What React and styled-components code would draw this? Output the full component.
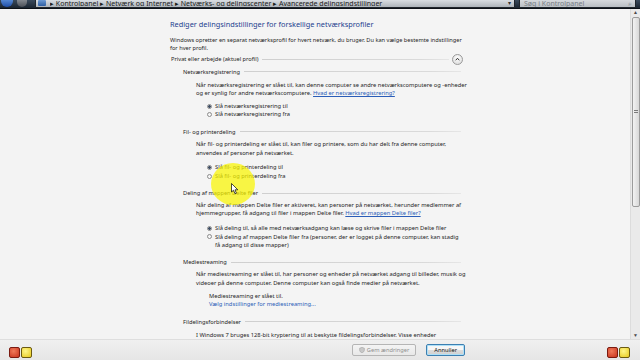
import React from 'react';
import styled, { createGlobalStyle } from 'styled-components';

const Global = createGlobalStyle`
  html, body { margin: 0; padding: 0; width: 640px; height: 360px; overflow: hidden; background: #f4f4f4; }
  body { font-family: "Noto Sans", "Open Sans", sans-serif; color: #1e1e1e; }
  * { box-sizing: border-box; }
`;

const Page = styled.div`
  position: relative;
  width: 640px;
  height: 360px;
  display: flex;
  flex-direction: column;
  background: #f4f4f4;
  overflow: hidden;
`;

const TopBar = styled.div`
  height: 9px;
  flex: none;
  display: flex;
  align-items: stretch;
  background: linear-gradient(#3a4a5c, #1a2430);
  border-bottom: 1px solid #0c1118;
`;

const NavButtons = styled.div`
  width: 35px;
  display: flex;
  align-items: flex-end;
  gap: 4px;
  padding: 0 0 1px 1px;
`;

const NavCircle = styled.div`
  width: ${p => (p.$big ? 12 : 10)}px;
  height: 8px;
  border-radius: 0 0 6px 6px;
  background: ${p => (p.$blue ? 'linear-gradient(#5c8fd8, #1f4ea8)' : 'linear-gradient(#8a8f96, #4b5058)')};
`;

const Address = styled.div`
  width: 480px;
  display: flex;
  align-items: flex-end;
  gap: 4px;
  padding: 0 3px 1px 2px;
  background: linear-gradient(#d9dde2, #aeb4bb);
  border: 1px solid #20262d;
  border-top: none;
  overflow: hidden;
`;

const AddrIcon = styled.div`
  width: 8px;
  height: 6px;
  background: linear-gradient(#6d9bd6, #2e5ea3);
  border-radius: 1px;
`;

const Crumbs = styled.div`
  flex: 1;
  font-size: 7px;
  line-height: 5px;
  height: 5px;
  overflow: hidden;
  white-space: nowrap;
  color: #1b1b1b;
`;

const AddrArrow = styled.div`
  font-size: 6px;
  line-height: 5px;
  color: #333;
`;

const Search = styled.div`
  margin-left: 4px;
  width: 117px;
  display: flex;
  align-items: flex-end;
  justify-content: space-between;
  padding: 0 3px 1px 4px;
  background: linear-gradient(#d6d9dd, #b9bec4);
  border: 1px solid #20262d;
  border-top: none;
  font-size: 7px;
  line-height: 5px;
  color: #7a7f86;
  overflow: hidden;
  white-space: nowrap;
`;

const Main = styled.div`
  flex: 1;
  display: flex;
  min-height: 0;
`;

const LeftPane = styled.div`
  width: 170px;
  flex: none;
  background: #f3f3f3;
`;

const Content = styled.div`
  width: 296px;
  flex: none;
  padding-top: 9.5px;
  display: flex;
  flex-direction: column;
`;

const Spacer = styled.div`
  flex: 1;
`;

const Title = styled.div`
  font-size: 7.35px;
  line-height: 11px;
  color: #1e3f8f;
  white-space: nowrap;
`;

const Intro = styled.div`
  margin-top: 6.5px;
  font-size: 5.65px;
  line-height: 8px;
  white-space: nowrap;
`;

const HeaderRow = styled.div`
  display: flex;
  align-items: center;
  height: 9px;
  margin-top: ${p => p.$mt}px;
  padding-left: ${p => p.$indent}px;
  padding-right: ${p => p.$pr || 5}px;
  font-size: 5.7px;
  white-space: nowrap;
`;

const Rule = styled.div`
  flex: 1;
  height: 1px;
  margin-left: 4px;
  background: linear-gradient(to right, #cfcfcf, #dadada 85%, #e6e6e6);
`;

const CollapseBtn = styled.div`
  width: 11px;
  height: 11px;
  margin-left: 3px;
  border-radius: 50%;
  border: 1px solid #9a9a9a;
  background: radial-gradient(circle at 50% 35%, #ffffff, #d6d6d6);
  display: flex;
  align-items: center;
  justify-content: center;
`;

const Para = styled.div`
  margin-top: ${p => p.$mt}px;
  padding-left: 26px;
  font-size: 5.75px;
  line-height: ${p => p.$lh || 8.4}px;
  white-space: nowrap;
`;

const Link = styled.span`
  color: #2a5db8;
  text-decoration: ${p => (p.$u ? 'underline' : 'none')};
`;

const RadioGroup = styled.div`
  margin-top: ${p => p.$mt}px;
  padding-left: 37px;
  display: flex;
  flex-direction: column;
`;

const RadioRow = styled.div`
  display: flex;
  align-items: flex-start;
  gap: 3px;
  font-size: 5.75px;
  line-height: 8.5px;
  white-space: nowrap;
`;

const RadioDot = styled.span`
  flex: none;
  width: 5px;
  height: 5px;
  margin-top: 1.8px;
  border-radius: 50%;
  border: 1px solid #8c8c8c;
  background: ${p =>
    p.$on
      ? 'radial-gradient(circle, #3f4f66 0 1.3px, #dfe3e8 1.5px)'
      : 'linear-gradient(#ececec, #ffffff)'};
`;

const Status = styled.div`
  margin-top: ${p => p.$mt}px;
  padding-left: 39px;
  font-size: 5.75px;
  line-height: 8.5px;
  white-space: nowrap;
`;

const Scrollbar = styled.div`
  width: 10px;
  flex: none;
  display: flex;
  flex-direction: column;
  align-items: center;
  background: #eaeaea;
  border-left: 1px solid #dcdcdc;
`;

const ScrollArrow = styled.div`
  height: 7px;
  font-size: 5px;
  line-height: 7px;
  color: #4a4a4a;
`;

const Thumb = styled.div`
  margin-top: 1px;
  width: 8px;
  height: 190px;
  border: 1px solid #9b9b9b;
  border-radius: 2px;
  background: linear-gradient(to right, #f2f2f2, #d8d8d8);
  display: flex;
  align-items: center;
  justify-content: center;
`;

const Grip = styled.div`
  width: 4px;
  height: 4px;
  background: repeating-linear-gradient(#7a7a7a 0 1px, transparent 1px 2px);
`;

const BottomBar = styled.div`
  height: 21px;
  flex: none;
  display: flex;
  align-items: center;
  background: linear-gradient(#f0f0f0, #e6e6e6);
  border-top: 1px solid #dedede;
`;

const TrayGroup = styled.div`
  width: ${p => p.$w}px;
  display: flex;
  gap: 1px;
  justify-content: ${p => (p.$end ? 'flex-end' : 'flex-start')};
  padding: ${p => p.$pad};
  margin-top: 4px;
`;

const TrayIcon = styled.div`
  width: 11px;
  height: 11px;
  border-radius: 2px;
  border: 1px solid ${p => (p.$red ? '#7a1a10' : '#6b5a10')};
  background: ${p =>
    p.$red
      ? 'radial-gradient(circle at 40% 35%, #f07a5a, #c8321c)'
      : 'radial-gradient(circle at 40% 35%, #fff68a, #e6c81c)'};
`;

const ButtonArea = styled.div`
  width: 295px;
  display: flex;
  justify-content: flex-end;
  gap: 10px;
`;

const Button = styled.div`
  height: 12px;
  padding: 0 ${p => p.$px}px;
  display: flex;
  align-items: center;
  gap: 2px;
  font-size: 5.7px;
  color: ${p => (p.$disabled ? '#8f8f8f' : '#111')};
  border-radius: 2px;
  border: 1px solid ${p => (p.$default ? '#3c7fb1' : '#b5b5b5')};
  background: ${p => (p.$disabled ? 'linear-gradient(#f4f4f4, #e8e8e8)' : 'linear-gradient(#f6f6f6 50%, #dddddd 50%, #cfcfcf)')};
  box-shadow: ${p => (p.$default ? 'inset 0 0 0 1px #aee0f7' : 'none')};
  white-space: nowrap;
`;

const Highlight = styled.div`
  position: absolute;
  left: 211px;
  top: 163px;
  width: 44px;
  height: 42px;
  border-radius: 50%;
  background: rgba(250, 245, 0, 0.72);
  pointer-events: none;
`;

const Cursor = styled.svg`
  position: absolute;
  left: 231px;
  top: 183px;
  pointer-events: none;
`;

const Shield = () => (
  <svg width="6" height="6" viewBox="0 0 10 10">
    <path d="M5 0.5 L9 2 V5 C9 7.5 7 9 5 9.6 C3 9 1 7.5 1 5 V2 Z" fill="#c8c8c8" stroke="#9a9a9a" strokeWidth="0.8" />
  </svg>
);

function Header({ children, mt, indent, pr, collapse }) {
  return (
    <HeaderRow $mt={mt} $indent={indent} $pr={pr}>
      {children}
      <Rule />
      {collapse && (
        <CollapseBtn>
          <svg width="5" height="4" viewBox="0 0 10 8">
            <path d="M1.5 6.5 L5 2.5 L8.5 6.5" fill="none" stroke="#333" strokeWidth="2" />
          </svg>
        </CollapseBtn>
      )}
    </HeaderRow>
  );
}

function Radio({ on, children }) {
  return (
    <RadioRow>
      <RadioDot $on={on} />
      <span>{children}</span>
    </RadioRow>
  );
}

export default function App() {
  return (
    <Page>
      <Global />
      <TopBar>
        <NavButtons>
          <NavCircle $blue $big />
          <NavCircle />
        </NavButtons>
        <Address>
          <AddrIcon />
          <Crumbs>▸ Kontrolpanel ▸ Netværk og Internet ▸ Netværks- og delingscenter ▸ Avancerede delingsindstillinger</Crumbs>
          <AddrArrow>▾</AddrArrow>
        </Address>
        <Search>
          <span>Søg i Kontrolpanel</span>
          <span>⌕</span>
        </Search>
      </TopBar>
      <Main>
        <LeftPane />
        <Content>
          <Title>Rediger delingsindstillinger for forskellige netværksprofiler</Title>
          <Intro>
            Windows opretter en separat netværksprofil for hvert netværk, du bruger. Du kan vælge bestemte indstillinger
            <br />
            for hver profil.
          </Intro>

          <Header mt={2.5} indent={1} pr={3} collapse>Privat eller arbejde (aktuel profil)</Header>

          <Header mt={4} indent={13}>Netværksregistrering</Header>
          <Para $mt={4.3}>
            Når netværksregistrering er slået til, kan denne computer se andre netværkscomputere og -enheder
            <br />
            og er synlig for andre netværkscomputere. <Link $u>Hvad er netværksregistrering?</Link>
          </Para>
          <RadioGroup $mt={4.3}>
            <Radio on>Slå netværksregistrering til</Radio>
            <Radio>Slå netværksregistrering fra</Radio>
          </RadioGroup>

          <Header mt={8.2} indent={13}>Fil- og printerdeling</Header>
          <Para $mt={4.3}>
            Når fil- og printerdeling er slået til, kan filer og printere, som du har delt fra denne computer,
            <br />
            anvendes af personer på netværket.
          </Para>
          <RadioGroup $mt={6.3}>
            <Radio on>Slå fil- og printerdeling til</Radio>
            <Radio>Slå fil- og printerdeling fra</Radio>
          </RadioGroup>

          <Header mt={8.2} indent={13}>Deling af mappen Delte filer</Header>
          <Para $mt={3.4}>
            Når deling af mappen Delte filer er aktiveret, kan personer på netværket, herunder medlemmer af
            <br />
            hjemmegrupper, få adgang til filer i mappen Delte filer. <Link $u>Hvad er mappen Delte filer?</Link>
          </Para>
          <RadioGroup $mt={6.3}>
            <Radio on>Slå deling til, så alle med netværksadgang kan læse og skrive filer i mappen Delte filer</Radio>
            <Radio>
              Slå deling af mappen Delte filer fra (personer, der er logget på denne computer, kan stadig
              <br />
              få adgang til disse mapper)
            </Radio>
          </RadioGroup>

          <Header mt={8.2} indent={13}>Mediestreaming</Header>
          <Para $mt={3.4} $lh={8.8}>
            Når mediestreaming er slået til, har personer og enheder på netværket adgang til billeder, musik og
            <br />
            videoer på denne computer. Denne computer kan også finde medier på netværket.
          </Para>
          <Status $mt={4}>
            Mediestreaming er slået til.
            <br />
            <Link>Vælg indstillinger for mediestreaming...</Link>
          </Status>

          <Header mt={8.7} indent={13}>Fildelingsforbindelser</Header>
          <Para $mt={4.3}>
            I Windows 7 bruges 128-bit kryptering til at beskytte fildelingsforbindelser. Visse enheder
          </Para>
        </Content>
        <Spacer />
        <Scrollbar>
          <ScrollArrow>▲</ScrollArrow>
          <Thumb>
            <Grip />
          </Thumb>
          <Spacer />
          <ScrollArrow>▼</ScrollArrow>
        </Scrollbar>
      </Main>
      <BottomBar>
        <TrayGroup $w={170} $pad="0 0 0 9px">
          <TrayIcon $red />
          <TrayIcon />
        </TrayGroup>
        <ButtonArea>
          <Button $disabled $px={6}>
            <Shield />
            Gem ændringer
          </Button>
          <Button $default $px={7}>Annuller</Button>
        </ButtonArea>
        <TrayGroup $w={175} $end $pad="0 10px 0 0">
          <TrayIcon $red />
          <TrayIcon />
        </TrayGroup>
      </BottomBar>
      <Highlight />
      <Cursor width="8" height="12" viewBox="0 0 8 12">
        <path d="M0.5 0.5 L0.5 9 L2.5 7.2 L4 10.8 L5.4 10.2 L4 6.8 L6.8 6.8 Z" fill="#fff" stroke="#000" strokeWidth="0.7" />
      </Cursor>
    </Page>
  );
}
